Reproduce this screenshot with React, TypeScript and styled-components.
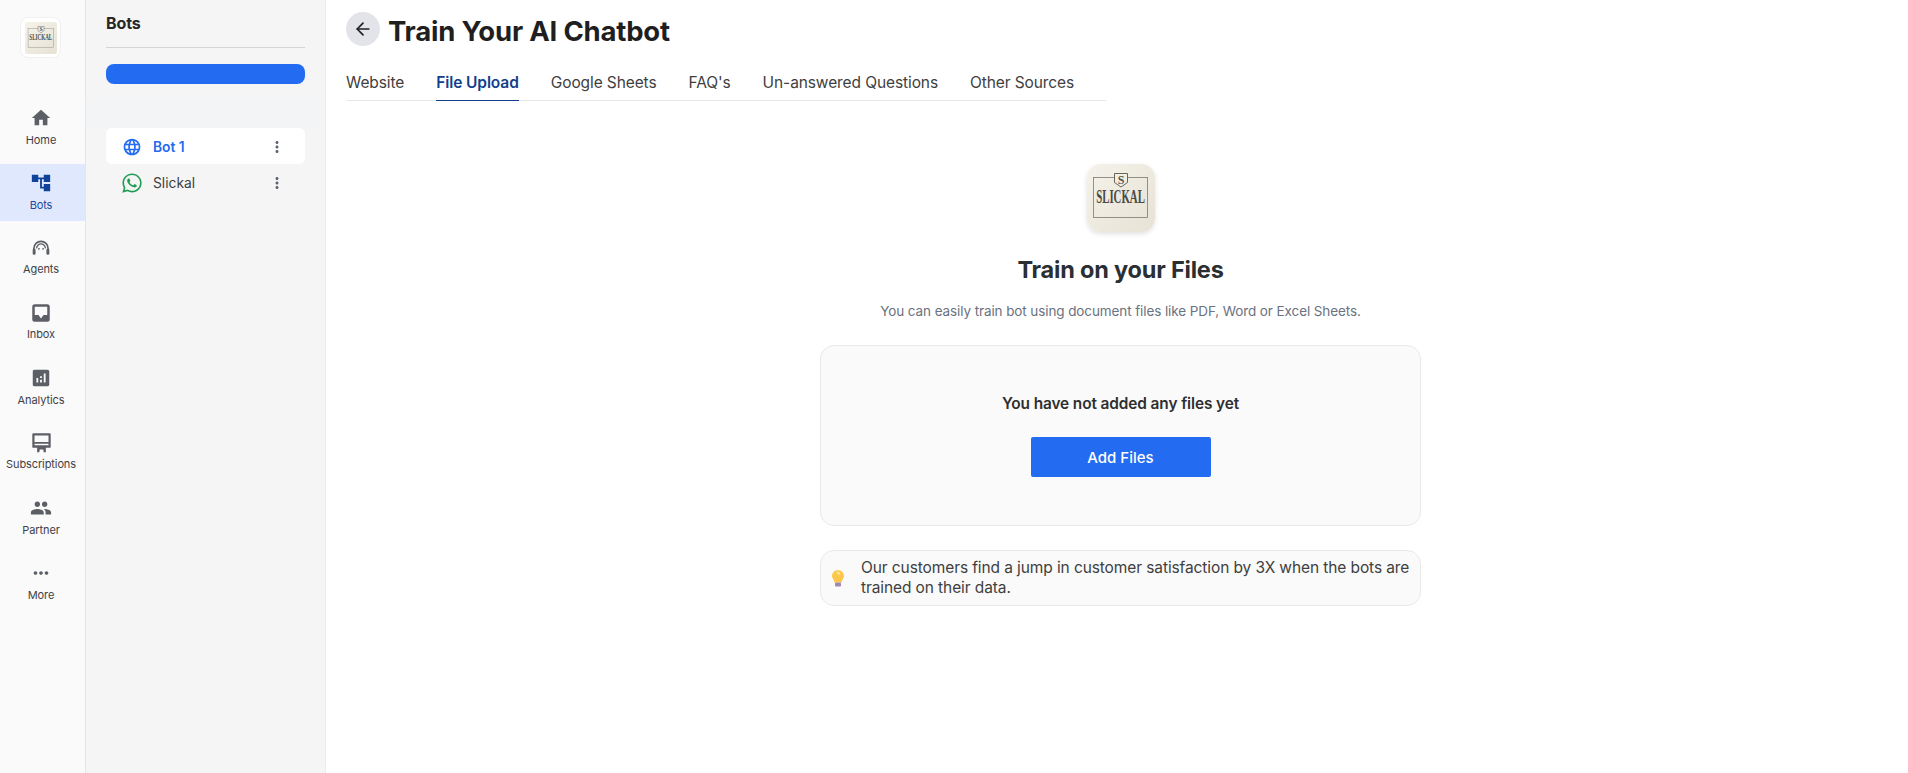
import React from "react";
import styled, { createGlobalStyle } from "styled-components";
import { MdHome, MdAccountTree, MdAnalytics, MdPeople, MdMoreVert, MdMoreHoriz, MdLanguage } from "react-icons/md";
import { FaWhatsapp } from "react-icons/fa";
import { ArrowLeft } from "lucide-react";

const Global = createGlobalStyle`
  html, body { margin: 0; padding: 0; height: 100%; background: #fff; }
  body { font-family: "Inter", "Liberation Sans", sans-serif; color: #262626; overflow: hidden; }
  #root { height: 100%; }
  * { box-sizing: border-box; }
`;

const Shell = styled.div`
  display: flex;
  width: 1908px;
  height: 773px;
`;

const Rail = styled.nav`
  width: 86px;
  flex: none;
  background: #fafafa;
  border-right: 1px solid #e5e5e5;
  display: flex;
  flex-direction: column;
`;

const RailLogo = styled.div`
  width: 41px;
  height: 41px;
  margin: 17px 0 0 20px;
  padding: 3.5px;
  background: #fff;
  border: 1px solid #f0f0f0;
  border-radius: 8px;
`;

const RailNav = styled.div`
  margin-top: 41px;
  display: flex;
  flex-direction: column;
`;

const RailItem = styled.div<{ $active?: boolean }>`
  height: 57px;
  margin-bottom: 8px;
  padding: 0 3px 2px 0;
  display: flex;
  flex-direction: column;
  align-items: center;
  justify-content: center;
  gap: 4px;
  font-size: 11px;
  line-height: 14px;
  letter-spacing: -0.1px;
  color: ${(p) => (p.$active ? "#1e4a9c" : "#3f3f46")};
  background: ${(p) => (p.$active ? "#e0e8fd" : "transparent")};
  svg { display: block; color: ${(p) => (p.$active ? "#0f4299" : "#5c5f66")}; }
`;

const Panel = styled.aside`
  width: 240px;
  flex: none;
  background: #f5f5f5;
  border-right: 1px solid #ececec;
  display: flex;
  flex-direction: column;
`;

const PanelHead = styled.div`
  margin: 0 20px;
  height: 48px;
  border-bottom: 1px solid #d4d4d4;
  font-size: 16px;
  font-weight: 700;
  line-height: 47px;
  color: #262626;
  letter-spacing: -0.1px;
`;

const NewBot = styled.div`
  margin: 16px 20px 0;
  height: 20px;
  background: #236bf0;
  border-radius: 8px;
`;

const Band = styled.div`
  height: 28px;
  margin-top: 16px;
  background: #f3f4f6;
`;

const BotList = styled.ul`
  margin: 0 20px;
  padding: 0;
  list-style: none;
`;

const BotRow = styled.li<{ $active?: boolean }>`
  height: 36px;
  display: flex;
  align-items: center;
  padding: 1px 12px 0 16px;
  border-radius: 6px;
  font-size: 13.8px;
  background: ${(p) => (p.$active ? "#fff" : "transparent")};
  color: ${(p) => (p.$active ? "#236bf0" : "#404040")};
  font-weight: ${(p) => (p.$active ? 600 : 400)};
`;

const BotIcon = styled.span<{ $color: string }>`
  width: 20px;
  height: 20px;
  display: flex;
  align-items: center;
  justify-content: center;
  margin-right: 11px;
  color: ${(p) => p.$color};
`;

const BotName = styled.span`
  flex: 1;
`;

const Dots = styled.span`
  display: flex;
  color: #5b6472;
  margin-right: 7px;
`;

const Main = styled.main`
  flex: 1;
  min-width: 0;
  padding: 12px 0 0 20px;
  display: flex;
  flex-direction: column;
`;

const TitleRow = styled.div`
  display: flex;
  align-items: center;
  gap: 8px;
  height: 34px;
`;

const BackButton = styled.button`
  width: 34px;
  height: 34px;
  border-radius: 50%;
  border: 0;
  padding: 0;
  background: #e2e4e9;
  color: #1f1f1f;
  display: flex;
  align-items: center;
  justify-content: center;
`;

const Title = styled.h1`
  margin: 0;
  padding-top: 3px;
  font-size: 27.5px;
  line-height: 34px;
  font-weight: 700;
  color: #1f1f1f;
  letter-spacing: -0.2px;
`;

const Tabs = styled.div`
  width: 760px;
  margin-top: 25px;
  display: flex;
  gap: 32px;
  border-bottom: 1px solid #e5e7eb;
`;

const Tab = styled.div<{ $active?: boolean }>`
  height: 30px;
  font-size: 15.5px;
  line-height: 24px;
  letter-spacing: -0.1px;
  margin-bottom: -1px;
  white-space: nowrap;
  color: ${(p) => (p.$active ? "#123e8c" : "#404040")};
  font-weight: ${(p) => (p.$active ? 600 : 400)};
  border-bottom: 1px solid ${(p) => (p.$active ? "#123e8c" : "transparent")};
`;

const Center = styled.section`
  width: 601px;
  margin: 63px 0 0 474px;
  display: flex;
  flex-direction: column;
  align-items: center;
`;

const BigLogo = styled.div`
  width: 68px;
  height: 68px;
  border-radius: 14px;
  box-shadow: 0 2px 5px rgba(0, 0, 0, 0.12);
`;

const Heading = styled.h2`
  margin: 22px 0 0;
  font-size: 23.5px;
  line-height: 32px;
  font-weight: 700;
  color: #2b2f33;
  letter-spacing: -0.2px;
`;

const Sub = styled.p`
  margin: 15px 0 0;
  font-size: 13.5px;
  line-height: 20px;
  color: #6b7280;
  letter-spacing: -0.1px;
`;

const Card = styled.div`
  width: 100%;
  height: 181px;
  margin-top: 24px;
  background: #fafafa;
  border: 1px solid #e9e9e9;
  border-radius: 14px;
  display: flex;
  flex-direction: column;
  align-items: center;
  padding-top: 47px;
`;

const CardText = styled.div`
  font-size: 15.4px;
  line-height: 22px;
  font-weight: 600;
  color: #2f2f2f;
  letter-spacing: -0.1px;
`;

const AddButton = styled.button`
  width: 180px;
  height: 40px;
  margin-top: 22px;
  border: 0;
  border-radius: 2px;
  background: #236bf0;
  color: #fff;
  font: 500 15px "Inter", sans-serif;
`;

const Tip = styled.div`
  width: 100%;
  margin-top: 24px;
  padding: 7px 4px 7px 11px;
  background: #fafafa;
  border: 1px solid #e9e9e9;
  border-radius: 14px;
  display: flex;
  align-items: center;
  gap: 17px;
  font-size: 15.5px;
  line-height: 20px;
  color: #404040;
  letter-spacing: -0.1px;
`;

const LogoText = styled.text`
  font-family: "Liberation Serif", serif;
  font-weight: 700;
`;

const LogoSvg = styled.svg`
  display: block;
  width: 100%;
  height: 100%;
`;

const Logo = ({ id, radius }: { id: string; radius: number }) => (
  <LogoSvg viewBox="0 0 68 68">
    <defs>
      <linearGradient id={id} x1="0" y1="0" x2="1" y2="1">
        <stop offset="0" stopColor="#f5f2ea" />
        <stop offset="1" stopColor="#e6e2d5" />
      </linearGradient>
    </defs>
    <rect width="68" height="68" rx={radius} fill={`url(#${id})`} />
    <rect x="6.500" y="13.500" width="54" height="40" fill="none" stroke="#7b7a70" strokeWidth="0.8" />
    <path d="M27.500 9.500h13v9l-6.500 4.500-6.500-4.500z" fill="#f1eee4" stroke="#66655c" strokeWidth="1" />
    <LogoText x="34" y="20" fontSize="12" textAnchor="middle" fill="#55544c">S</LogoText>
    <g transform="translate(33.500 39) scale(0.57 1)">
      <LogoText x="0" y="0" fontSize="19" textAnchor="middle" fill="#4b4a43">SLICKAL</LogoText>
    </g>
  </LogoSvg>
);

const AgentIcon = () => (
  <svg width="20" height="20" viewBox="0 0 24 24" fill="none" stroke="currentColor" strokeWidth="2">
    <path d="M3.500 16v-3.500a8.500 8.500 0 0 1 17 0V16" />
    <path d="M6.500 12.500c1-4 4-5.500 5.500-5.500s4.500 1.500 5.500 5.500" strokeWidth="1.600" />
    <rect x="2" y="13" width="3.500" height="7" rx="1.500" fill="currentColor" stroke="none" />
    <rect x="18.500" y="13" width="3.500" height="7" rx="1.500" fill="currentColor" stroke="none" />
    <circle cx="9.500" cy="13" r="1.100" fill="currentColor" stroke="none" />
    <circle cx="14.500" cy="13" r="1.100" fill="currentColor" stroke="none" />
  </svg>
);

const InboxIcon = () => (
  <svg width="20" height="20" viewBox="0 0 24 24" fill="currentColor">
    <path fillRule="evenodd" d="M4.500 1.500h15a3 3 0 0 1 3 3v15a3 3 0 0 1-3 3h-15a3 3 0 0 1-3-3v-15a3 3 0 0 1 3-3zM4.500 4.500v10h4.500l3 4 3-4h4.500v-10z" />
  </svg>
);

const SubsIcon = () => (
  <svg width="21" height="21" viewBox="0 0 24 24" fill="currentColor">
    <path fillRule="evenodd" d="M2.500 1.500h19a1 1 0 0 1 1 1v14.500a1 1 0 0 1-1 1H17v5h-2.500l-.5-3h-4l-.5 3H7v-5H2.500a1 1 0 0 1-1-1V2.500a1 1 0 0 1 1-1zM4 4v7.500h16V4zM4 13.500v1.500h16v-1.500z" />
  </svg>
);

const Bulb = () => (
  <svg width="12" height="17" viewBox="0 0 12 17" style={{ flex: "none" }}>
    <path d="M6 0a6 6 0 0 1 6 6c0 2.500-2 3.500-2.500 6.500h-7C2 9.500 0 8.500 0 6a6 6 0 0 1 6-6z" fill="#fcc74a" />
    <path d="M5 1.500c2 0 3.500 1 3.500 2.500 0 1-1 1-2 .5S3.500 2 5 1.500z" fill="#fee79a" />
    <rect x="3" y="12.500" width="6" height="4" rx="1" fill="#9b8bb0" />
  </svg>
);

const navItems: { label: string; icon: React.ReactNode; active?: boolean }[] = [
  { label: "Home", icon: <MdHome size={22} /> },
  { label: "Bots", icon: <MdAccountTree size={22} />, active: true },
  { label: "Agents", icon: <AgentIcon /> },
  { label: "Inbox", icon: <InboxIcon /> },
  { label: "Analytics", icon: <MdAnalytics size={22} /> },
  { label: "Subscriptions", icon: <SubsIcon /> },
  { label: "Partner", icon: <MdPeople size={22} /> },
  { label: "More", icon: <MdMoreHoriz size={22} /> },
];

const tabs = ["Website", "File Upload", "Google Sheets", "FAQ's", "Un-answered Questions", "Other Sources"];

export default function App() {
  return (
    <Shell>
      <Global />
      <Rail>
        <RailLogo><Logo id="logo-small" radius={5} /></RailLogo>
        <RailNav>
          {navItems.map((n) => (
            <RailItem key={n.label} $active={n.active}>
              {n.icon}
              <span>{n.label}</span>
            </RailItem>
          ))}
        </RailNav>
      </Rail>
      <Panel>
        <PanelHead>Bots</PanelHead>
        <NewBot />
        <Band />
        <BotList>
          <BotRow $active>
            <BotIcon $color="#236bf0"><MdLanguage size={24} /></BotIcon>
            <BotName>Bot 1</BotName>
            <Dots><MdMoreVert size={18} /></Dots>
          </BotRow>
          <BotRow>
            <BotIcon $color="#1f9d55"><FaWhatsapp size={22} /></BotIcon>
            <BotName>Slickal</BotName>
            <Dots><MdMoreVert size={18} /></Dots>
          </BotRow>
        </BotList>
      </Panel>
      <Main>
        <TitleRow>
          <BackButton><ArrowLeft size={20} /></BackButton>
          <Title>Train Your AI Chatbot</Title>
        </TitleRow>
        <Tabs>
          {tabs.map((t) => (
            <Tab key={t} $active={t === "File Upload"}>{t}</Tab>
          ))}
        </Tabs>
        <Center>
          <BigLogo><Logo id="logo-big" radius={14} /></BigLogo>
          <Heading>Train on your Files</Heading>
          <Sub>You can easily train bot using document files like PDF, Word or Excel Sheets.</Sub>
          <Card>
            <CardText>You have not added any files yet</CardText>
            <AddButton>Add Files</AddButton>
          </Card>
          <Tip>
            <Bulb />
            <span>Our customers find a jump in customer satisfaction by 3X when the bots are trained on their data.</span>
          </Tip>
        </Center>
      </Main>
    </Shell>
  );
}
